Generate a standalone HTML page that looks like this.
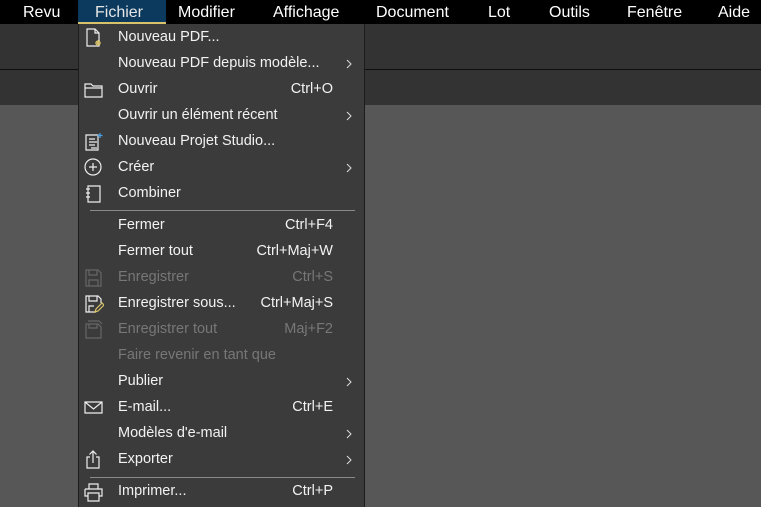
<!DOCTYPE html><html><head><meta charset="utf-8"><style>
body{margin:0;width:761px;height:507px;overflow:hidden;background:#575757;font-family:"Liberation Sans",sans-serif;position:relative}
.bar{position:absolute;left:0;top:0;width:761px;height:24px;background:#000;color:#fff;font-size:16px}
.bar span{position:absolute;top:4px}
.t1{position:absolute;left:0;top:24px;width:761px;height:45px;background:#333}
.ln{position:absolute;left:0;top:69px;width:761px;height:1px;background:#0e0e0e}
.t2{position:absolute;left:0;top:70px;width:761px;height:35px;background:#333}
.fi{position:absolute;left:78px;top:0;width:88px;height:22px;background:#0c3a5e;border-bottom:2px solid #d8c36a}
.menu{position:absolute;left:78px;top:24px;width:285px;height:483px;background:#3b3b3b;border-left:1px solid #1c1c1c;border-right:1px solid #1c1c1c}
.r{position:absolute;left:0;width:285px;height:26px;color:#f2f2f2;font-size:14.5px}
.r .l{position:absolute;left:39px;top:5px}
.r .k{position:absolute;right:31px;top:5px}
.r .a{position:absolute;left:267px;top:9px}
.d{color:#777}
.sep{position:absolute;left:11px;width:265px;height:1px;background:#8a8a8a}
svg.i{position:absolute;left:5px;top:4px}
</style></head><body>
<div class="bar"><div class="fi"></div>
<span style="left:23px">Revu</span><span style="left:95px;color:#e6e6e6">Fichier</span><span style="left:178px">Modifier</span><span style="left:273px">Affichage</span><span style="left:376px">Document</span><span style="left:488px">Lot</span><span style="left:549px">Outils</span><span style="left:627px">Fenêtre</span><span style="left:718px">Aide</span></div>
<div class="t1"></div><div class="ln"></div><div class="t2"></div>
<div class="menu">
<div class="r" style="top:0"><svg class="i" width="20" height="20" fill="none" stroke="#eee" stroke-width="1.2"><path d="M3 1h8l4 4v13H3z M11 1v4h4"/><path d="M14 12v6M11 15h6M12 13l4 4M16 13l-4 4" stroke="#d8c36a"/></svg><span class="l">Nouveau PDF...</span></div>
<div class="r" style="top:26px"><span class="l">Nouveau PDF depuis modèle...</span><svg class="a" width="6" height="10" fill="none" stroke="#ddd"><path d="M1 1l4 4-4 4"/></svg></div>
<div class="r" style="top:52px"><svg class="i" width="20" height="20" fill="none" stroke="#eee" stroke-width="1.2"><path d="M1 4h6l2 2h9v11H1z M1 8h17"/></svg><span class="l">Ouvrir</span><span class="k">Ctrl+O</span></div>
<div class="r" style="top:78px"><span class="l">Ouvrir un élément récent</span><svg class="a" width="6" height="10" fill="none" stroke="#ddd"><path d="M1 1l4 4-4 4"/></svg></div>
<div class="r" style="top:104px"><svg class="i" width="20" height="20" fill="none" stroke="#eee" stroke-width="1.2"><path d="M2 3h12v15H2z M5 7h6M5 10h8M5 13h6M7 16h6"/><path d="M16 1v5M13.5 3.5h5" stroke="#4aa3e8"/></svg><span class="l">Nouveau Projet Studio...</span></div>
<div class="r" style="top:130px"><svg class="i" width="20" height="20" fill="none" stroke="#eee" stroke-width="1.2"><circle cx="9" cy="9" r="8"/><path d="M9 5v8M5 9h8"/></svg><span class="l">Créer</span><svg class="a" width="6" height="10" fill="none" stroke="#ddd"><path d="M1 1l4 4-4 4"/></svg></div>
<div class="r" style="top:156px"><svg class="i" width="20" height="20" fill="none" stroke="#eee" stroke-width="1.2"><path d="M4 2h12v16H4z M2 5h4M2 9h4M2 13h4"/></svg><span class="l">Combiner</span></div>
<div class="sep" style="top:186px"></div>
<div class="r" style="top:188px"><span class="l">Fermer</span><span class="k">Ctrl+F4</span></div>
<div class="r" style="top:214px"><span class="l">Fermer tout</span><span class="k">Ctrl+Maj+W</span></div>
<div class="r d" style="top:240px"><svg class="i" width="20" height="20" fill="none" stroke="#666" stroke-width="1.2"><path d="M2 2h12l3 3v13H2z M5 2v5h8V2 M5 18v-6h9v6"/></svg><span class="l">Enregistrer</span><span class="k">Ctrl+S</span></div>
<div class="r" style="top:266px"><svg class="i" width="20" height="20" fill="none" stroke="#eee" stroke-width="1.2"><path d="M12 18H2V2h12l3 3v4 M5 2v5h8V2 M5 18v-6h5"/><path d="M11 18l1-3 6-6 2 2-6 6z" stroke="#d8c36a"/></svg><span class="l">Enregistrer sous...</span><span class="k">Ctrl+Maj+S</span></div>
<div class="r d" style="top:292px"><svg class="i" width="20" height="20" fill="none" stroke="#666" stroke-width="1.2"><path d="M2 4h12l3 3v11H2z M5 4v4h8V4 M4 1h11l3 3"/></svg><span class="l">Enregistrer tout</span><span class="k">Maj+F2</span></div>
<div class="r d" style="top:318px"><span class="l">Faire revenir en tant que</span></div>
<div class="r" style="top:344px"><span class="l">Publier</span><svg class="a" width="6" height="10" fill="none" stroke="#ddd"><path d="M1 1l4 4-4 4"/></svg></div>
<div class="r" style="top:370px"><svg class="i" width="20" height="20" fill="none" stroke="#eee" stroke-width="1.2"><path d="M1 4h17v11H1z M1 4l8.5 7L18 4"/></svg><span class="l">E-mail...</span><span class="k">Ctrl+E</span></div>
<div class="r" style="top:396px"><span class="l">Modèles d'e-mail</span><svg class="a" width="6" height="10" fill="none" stroke="#ddd"><path d="M1 1l4 4-4 4"/></svg></div>
<div class="r" style="top:422px"><svg class="i" width="20" height="20" fill="none" stroke="#eee" stroke-width="1.2"><path d="M6 7H3v11h12V7h-3 M9 13V1M5.5 4.5L9 1l3.5 3.5"/></svg><span class="l">Exporter</span><svg class="a" width="6" height="10" fill="none" stroke="#ddd"><path d="M1 1l4 4-4 4"/></svg></div>
<div class="sep" style="top:453px"></div>
<div class="r" style="top:454px"><svg class="i" width="20" height="20" fill="none" stroke="#eee" stroke-width="1.2"><path d="M5 7V2h9v5 M1 7h17v7h-3 M4 14H1V7 M4 11h11v8H4z"/></svg><span class="l">Imprimer...</span><span class="k">Ctrl+P</span></div>
</div>
</body></html>
